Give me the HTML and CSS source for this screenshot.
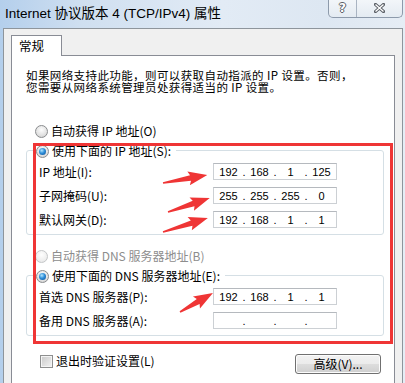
FILE: index.html
```html
<!DOCTYPE html>
<html lang="zh-CN">
<head>
    <meta charset="UTF-8">
    <title>Internet 协议版本 4 (TCP/IPv4) 属性</title>
    <link rel="stylesheet" href="styles.css">
</head>
<body>

<div class="window">
    <div class="titlebar">
        <span class="title">Internet 协议版本 4 (TCP/IPv4) 属性</span>
        <div class="caption-buttons">
            <span class="cap-btn help">?</span>
            <span class="cap-btn close">
                <svg width="11" height="10" viewBox="0 0 11 10">
                    <path d="M1.5 1.5 L9.5 8.5 M9.5 1.5 L1.5 8.5" stroke="#5a5f66" stroke-width="3.2" stroke-linecap="square"/>
                    <path d="M1.5 1.5 L9.5 8.5 M9.5 1.5 L1.5 8.5" stroke="#fff" stroke-width="1.3"/>
                </svg>
            </span>
        </div>
    </div>

    <div class="frame">
        <div class="tabs"><span class="tab">常规</span></div>

        <div class="page">
            <p class="intro">如果网络支持此功能，则可以获取自动指派的 IP 设置。否则，<br>您需要从网络系统管理员处获得适当的 IP 设置。</p>

            <div class="option"><span class="radio"></span>自动获得 IP 地址(O)</div>

            <div class="group">
                <div class="legend"><span class="radio on"></span>使用下面的 IP 地址(S):</div>
                <div class="row">
                    <span class="label">IP 地址(I):</span>
                    <span class="ip"><span class="num">192</span><span class="dot">.</span><span class="num">168</span><span class="dot">.</span><span class="num">1</span><span class="dot">.</span><span class="num">125</span></span>
                </div>
                <div class="row">
                    <span class="label">子网掩码(U):</span>
                    <span class="ip"><span class="num">255</span><span class="dot">.</span><span class="num">255</span><span class="dot">.</span><span class="num">255</span><span class="dot">.</span><span class="num">0</span></span>
                </div>
                <div class="row">
                    <span class="label">默认网关(D):</span>
                    <span class="ip"><span class="num">192</span><span class="dot">.</span><span class="num">168</span><span class="dot">.</span><span class="num">1</span><span class="dot">.</span><span class="num">1</span></span>
                </div>
            </div>

            <div class="option disabled"><span class="radio off"></span>自动获得 DNS 服务器地址(B)</div>

            <div class="group">
                <div class="legend"><span class="radio on"></span>使用下面的 DNS 服务器地址(E):</div>
                <div class="row">
                    <span class="label">首选 DNS 服务器(P):</span>
                    <span class="ip"><span class="num">192</span><span class="dot">.</span><span class="num">168</span><span class="dot">.</span><span class="num">1</span><span class="dot">.</span><span class="num">1</span></span>
                </div>
                <div class="row">
                    <span class="label">备用 DNS 服务器(A):</span>
                    <span class="ip"><span class="num"></span><span class="dot">.</span><span class="num"></span><span class="dot">.</span><span class="num"></span><span class="dot">.</span><span class="num"></span></span>
                </div>
            </div>

            <div class="footer">
                <label class="check"><span class="checkbox"></span>退出时验证设置(L)</label>
                <button class="btn">高级(V)...</button>
            </div>
        </div>
    </div>

    <!-- annotation: red box and arrows drawn over the dialog -->
    <div class="highlight"></div>
    <svg class="arrows" width="405" height="383" viewBox="0 0 405 383">
        <g fill="#ef3535">
            <polygon transform="translate(163 183) rotate(-10.3)" points="0,-0.8 28,-2.8 26,-7 45,0 26,7 28,2.8 0,0.8"/>
            <polygon transform="translate(168 212) rotate(-18.4)" points="0,-0.8 27,-2.8 25,-7 44,0 25,7 27,2.8 0,0.8"/>
            <polygon transform="translate(163 232) rotate(-17.3)" points="0,-0.8 30,-2.8 28,-7 47,0 28,7 30,2.8 0,0.8"/>
            <polygon transform="translate(180 312) rotate(-29.9)" points="0,-0.8 21,-2.8 19,-7 38,0 19,7 21,2.8 0,0.8"/>
        </g>
    </svg>
</div>

</body>
</html>
```

FILE: styles.css
```css
body {
    margin: 0;
    font-family: "Noto Sans CJK SC", "Liberation Sans", sans-serif;
    font-size: 12px;
    line-height: 16px;
    color: #000;
}
.window {
    position: relative;
    width: 405px;
    height: 383px;
    overflow: hidden;
    background: linear-gradient(90deg, #b4cfec 0%, #cfdff0 20%, #e2ebf5 55%, #dde7f2 80%, #e6edf5 100%);
}
.titlebar {
    display: flex;
    align-items: center;
    height: 28px;
}
.title {
    padding-left: 5px;
    font-family: "Liberation Sans", "Noto Sans CJK SC", sans-serif;
    font-size: 13.5px;
}
.caption-buttons {
    display: flex;
    align-self: flex-start;
    margin-left: auto;
    margin-right: 2px;
    margin-top: -2px;
    height: 20px;
    border: 1px solid #8d9aab;
    border-top: none;
    border-radius: 0 0 5px 5px;
    background: linear-gradient(#f4f7fa, #e4ebf2);
    box-sizing: border-box;
}
.cap-btn {
    display: flex;
    align-items: center;
    justify-content: center;
    padding-top: 1px;
}
.help {
    width: 27px;
    border-right: 1px solid #a9b4c2;
    font-family: "DejaVu Sans", sans-serif;
    font-weight: bold;
    font-size: 12px;
    color: #fff;
    text-shadow: 1px 0 0 #5a5f66, -1px 0 0 #5a5f66, 0 1px 0 #5a5f66, 0 -1px 0 #5a5f66;
}
.close {
    width: 45px;
}
.frame {
    margin-left: 3px;
    width: 400px;
    height: 355px;
    box-sizing: border-box;
    border: 1px solid #8e959c;
    border-bottom: none;
    background-color: #f0f0f0;
    padding: 6px 0 0 7px;
}
.tabs {
    display: flex;
    height: 20px;
}
.tab {
    position: relative;
    z-index: 1;
    width: 51px;
    height: 21px;
    box-sizing: border-box;
    padding-left: 7px;
    padding-top: 2px;
    border: 1px solid #898c95;
    border-bottom: none;
    background-color: #fff;
    font-size: 12.5px;
}
.page {
    width: 384px;
    height: 330px;
    box-sizing: border-box;
    border: 1px solid #898c95;
    border-bottom: none;
    background-color: #fff;
    padding: 13px 10px 0 14px;
}
.intro {
    margin: 0;
    height: 24px;
    font-size: 11.5px;
    line-height: 12px;
    letter-spacing: 0.4px;
}
.option {
    display: flex;
    align-items: center;
    height: 16px;
    margin-top: 30px;
    margin-left: 9px;
}
.option.disabled {
    margin-top: 13px;
    color: #8d8d8d;
}
.radio {
    position: relative;
    flex: none;
    width: 13px;
    height: 13px;
    margin-right: 3px;
    box-sizing: border-box;
    border-radius: 50%;
    border: 1px solid #8a8c8e;
    background: radial-gradient(circle at 50% 35%, #fdfdfd, #e2e2e2 60%, #c8c8c8);
}
.radio.off {
    border-color: #c4c6c8;
    background: radial-gradient(circle at 50% 35%, #fefefe, #efefef 60%, #e2e2e2);
}
.radio.on::after {
    content: "";
    position: absolute;
    left: 2px;
    top: 2px;
    width: 7px;
    height: 7px;
    border-radius: 50%;
    background: radial-gradient(circle at 40% 35%, #b2e6ff, #2e8ed9 45%, #0a4a8f);
}
.group {
    margin-top: 11px;
    padding: 0 0 6px 12px;
    border: 1px solid #d5dfe5;
    border-radius: 3px;
}
.legend {
    display: flex;
    align-items: center;
    width: max-content;
    height: 16px;
    margin: -8px 0 0 -6px;
    padding: 0 5px 0 3px;
    background-color: #fff;
}
.row {
    display: flex;
    align-items: center;
    height: 17px;
    margin-top: 7px;
}
.legend + .row {
    margin-top: 4px;
}
.label {
    width: 174px;
    flex: none;
}
.ip {
    display: flex;
    align-items: center;
    width: 124px;
    height: 17px;
    box-sizing: border-box;
    padding-left: 3px;
    border: 1px solid #ccd0d4;
    border-top-color: #b5b9be;
    font-family: "Liberation Sans", sans-serif;
    font-size: 11px;
}
.num {
    width: 23px;
    text-align: center;
}
.dot {
    width: 8px;
    text-align: center;
}
.footer {
    display: flex;
    justify-content: space-between;
    margin-top: 18px;
}
.check {
    display: flex;
    align-items: center;
    height: 14px;
    margin-left: 14px;
}
.checkbox {
    width: 13px;
    height: 13px;
    margin-right: 3px;
    box-sizing: border-box;
    border: 1px solid #8e8f8f;
    box-shadow: inset 0 0 0 1px #f4f4f4;
    background: linear-gradient(135deg, #c9c9c9, #f3f3f3);
}
.btn {
    width: 86px;
    height: 20px;
    margin-right: 3px;
    padding: 0;
    border: 1px solid #707070;
    border-radius: 3px;
    background: linear-gradient(#f2f2f2 0%, #ebebeb 50%, #dddddd 51%, #cfcfcf 100%);
    box-shadow: inset 0 0 0 1px #fcfcfc;
    font-family: "Noto Sans CJK SC", sans-serif;
    font-size: 12px;
    line-height: 16px;
    color: #000;
}
.highlight {
    position: absolute;
    left: 33px;
    top: 143px;
    width: 360px;
    height: 201px;
    box-sizing: border-box;
    border: 3px solid #ef3535;
}
.arrows {
    position: absolute;
    left: 0;
    top: 0;
    pointer-events: none;
}
```
